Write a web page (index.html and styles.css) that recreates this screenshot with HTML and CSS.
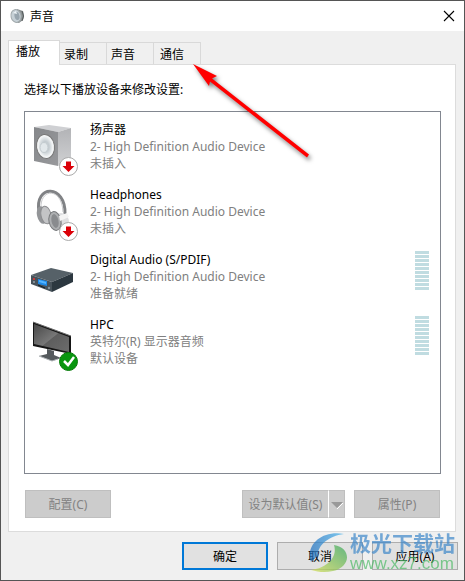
FILE: index.html
```html
<!DOCTYPE html>
<html lang="zh-CN">
<head>
    <meta charset="UTF-8">
    <meta name="viewport" content="width=device-width, initial-scale=1.0">
    <title>声音</title>
    <link rel="stylesheet" href="styles.css">
</head>
<body>

<!-- Shared shapes -->
<svg class="defs" width="0" height="0" aria-hidden="true">
    <defs>
        <linearGradient id="metal" x1="0" y1="0" x2="1" y2="1">
            <stop offset="0" stop-color="#85878a"/>
            <stop offset="1" stop-color="#98999c"/>
        </linearGradient>
        <linearGradient id="side" x1="0" y1="0" x2="0" y2="1">
            <stop offset="0" stop-color="#b2b3b6"/>
            <stop offset="1" stop-color="#d0d1d3"/>
        </linearGradient>
        <linearGradient id="screen" x1="0" y1="0" x2="1" y2="1">
            <stop offset="0" stop-color="#484848"/>
            <stop offset="0.5" stop-color="#777"/>
            <stop offset="0.52" stop-color="#5e5e5e"/>
            <stop offset="1" stop-color="#6c6c6c"/>
        </linearGradient>
        <radialGradient id="cone">
            <stop offset="0" stop-color="#d5dde1"/>
            <stop offset="0.5" stop-color="#c3cbd0"/>
            <stop offset="1" stop-color="#eef1f2"/>
        </radialGradient>
        <linearGradient id="swoosh" x1="0" y1="0" x2="1" y2="0">
            <stop offset="0" stop-color="#1f6fc0"/>
            <stop offset="1" stop-color="#47b4ec"/>
        </linearGradient>
        <linearGradient id="leaf" x1="0" y1="1" x2="1" y2="0">
            <stop offset="0" stop-color="#d6dd52"/>
            <stop offset="1" stop-color="#2fa557"/>
        </linearGradient>
        <g id="unplugged">
            <circle cx="38.500" cy="45.500" r="9" fill="#fff" stroke="#aaa"/>
            <path d="M36 40.500h5v4.500h3.500l-6 6-6-6H36z" fill="#db0008"/>
        </g>
    </defs>
</svg>

<div class="window">
    <header class="titlebar">
        <svg class="app-icon" width="16" height="16" viewBox="0 0 16 16">
            <path d="M7 1l6 2q2 5 0 9l-4 3-4-1z" fill="#8c9293"/>
            <ellipse cx="6" cy="8" rx="5" ry="6.500" transform="rotate(-12 6 8)" fill="#c6d0d6" stroke="#a1a9ac"/>
            <ellipse cx="7" cy="8" rx="2.500" ry="4" transform="rotate(-12 7 8)" fill="#98a5ae"/>
            <path d="M3 5l3-2 1 3z" fill="#edf3f6"/>
            <path d="M12 3q3 5 0 10" fill="none" stroke="#555b5c"/>
        </svg>
        <h1 class="title">声音</h1>
        <button class="close" aria-label="关闭">
            <svg width="12" height="12" viewBox="0 0 12 12"><path d="M1 1l10 10M11 1L1 11" stroke="#000" stroke-width="1.100"/></svg>
        </button>
    </header>

    <main class="content">
        <div class="tabs" role="tablist">
            <button class="tab active" role="tab" aria-selected="true">播放</button>
            <button class="tab" role="tab">录制</button>
            <button class="tab" role="tab">声音</button>
            <button class="tab" role="tab">通信</button>
        </div>

        <section class="panel">
            <p class="hint">选择以下播放设备来修改设置:</p>

            <ul class="devices">
                <li class="device">
                    <svg class="device-icon" width="50" height="56" viewBox="0 0 50 56">
                        <path d="M4 6l15-2 22 3-13 4z" fill="#cfd0d3"/>
                        <path d="M28 11l13-4v31l-13 7z" fill="url(#side)"/>
                        <path d="M4 6l24 5v34L4 40z" fill="url(#metal)"/>
                        <ellipse cx="15.500" cy="25.500" rx="9" ry="12" transform="rotate(-8 15.500 25.500)" fill="#f2f4f5" stroke="#777"/>
                        <ellipse cx="15.500" cy="25.500" rx="7" ry="10" transform="rotate(-8 15.500 25.500)" fill="url(#cone)"/>
                        <ellipse cx="14" cy="26.500" rx="4" ry="5" fill="#e2e8eb" stroke="#c3cbcf"/>
                        <use href="#unplugged"/>
                    </svg>
                    <div class="device-text">
                        <h2 class="name">扬声器</h2>
                        <p class="detail">2- High Definition Audio Device</p>
                        <p class="detail">未插入</p>
                    </div>
                </li>
                <li class="device">
                    <svg class="device-icon" width="50" height="56" viewBox="0 0 50 56">
                        <path d="M9 26C4-2 36-2 35 28" fill="none" stroke="#808285" stroke-width="3"/>
                        <path d="M11 22C10 2 32 1 33 26" fill="none" stroke="#c7c8ca"/>
                        <ellipse cx="12" cy="29" rx="5" ry="9" transform="rotate(-12 12 29)" fill="#939598"/>
                        <ellipse cx="16" cy="29" rx="5" ry="9" transform="rotate(-12 16 29)" fill="#c3c4c6" stroke="#8c8d90"/>
                        <ellipse cx="31" cy="36" rx="8" ry="9" fill="#dedfe1"/>
                        <ellipse cx="25" cy="35" rx="6" ry="9.500" transform="rotate(-12 25 35)" fill="#aeb0b2" stroke="#77797c"/>
                        <ellipse cx="25" cy="35" rx="3.500" ry="7" transform="rotate(-12 25 35)" fill="#898b8e"/>
                        <path d="M29 30l8-3 2 4-9 4z" fill="#f4f4f4"/>
                        <use href="#unplugged"/>
                    </svg>
                    <div class="device-text">
                        <h2 class="name">Headphones</h2>
                        <p class="detail">2- High Definition Audio Device</p>
                        <p class="detail">未插入</p>
                    </div>
                </li>
                <li class="device">
                    <svg class="device-icon" width="50" height="56" viewBox="0 0 50 56">
                        <path d="M1 24l20-7 22 5-21 9z" fill="#566168"/>
                        <path d="M1 24l21 7v10L1 33z" fill="#47525a"/>
                        <path d="M22 31l21-9v9l-21 10z" fill="#2c3840"/>
                        <path d="M8 28l9 2v5l-9-2z" fill="#1e8bea"/>
                        <path d="M9 29l7 2v2l-7-2z" fill="#55b5ff"/>
                        <path d="M8 34l7 3" stroke="#101c25"/>
                        <circle cx="4" cy="28" r="1" fill="#ea3434"/>
                        <circle cx="4" cy="31" r="1" fill="#92a0a8"/>
                        <circle cx="19" cy="37" r="1.200" fill="#84939c"/>
                    </svg>
                    <div class="device-text">
                        <h2 class="name">Digital Audio (S/PDIF)</h2>
                        <p class="detail">2- High Definition Audio Device</p>
                        <p class="detail">准备就绪</p>
                    </div>
                    <div class="meter"></div>
                </li>
                <li class="device">
                    <svg class="device-icon" width="50" height="56" viewBox="0 0 50 56">
                        <path d="M17 33l7 2v4l7 3-9 3-13-5 8-2z" fill="#555a5d"/>
                        <path d="M9 40l13 5 6-2" fill="none" stroke="#aeb3b6"/>
                        <path d="M3 6l38 14v18L3 30z" fill="#151515"/>
                        <path d="M4 8l35 13v15L4 28z" fill="url(#screen)"/>
                        <path d="M3 6l38 14" stroke="#6c6c6c"/>
                        <circle cx="38.500" cy="45.500" r="9" fill="#08960f" stroke="#087b0b"/>
                        <path d="M34 45l4 4 6-8" fill="none" stroke="#fff" stroke-width="2.500"/>
                    </svg>
                    <div class="device-text">
                        <h2 class="name">HPC</h2>
                        <p class="detail">英特尔(R) 显示器音频</p>
                        <p class="detail">默认设备</p>
                    </div>
                    <div class="meter"></div>
                </li>
            </ul>

            <div class="actions">
                <button class="btn configure" disabled>配置(C)</button>
                <div class="split">
                    <button class="btn split-main" disabled>设为默认值(S)</button>
                    <button class="btn split-arrow" disabled aria-label="更多">
                        <svg width="12" height="8" viewBox="0 0 12 8"><path d="M0 1h12L6 7z" fill="#999"/><path d="M6 8l6-6" stroke="#fff"/></svg>
                    </button>
                </div>
                <button class="btn" disabled>属性(P)</button>
            </div>
        </section>

        <footer class="footer">
            <button class="btn primary">确定</button>
            <button class="btn">取消</button>
            <button class="btn">应用(A)</button>
        </footer>
    </main>

    <svg class="pointer" width="130" height="108" viewBox="0 0 130 108" aria-hidden="true">
        <path d="M5 4l24 12-5 2.500 97 76-2 3-97-76-1 4.500z" fill="#f00"/>
    </svg>

    <div class="watermark">
        <svg width="42" height="42" viewBox="0 0 42 42" aria-hidden="true">
            <path d="M3 31C-3 14 14-1 36 3 20 5 9 15 10 25q-3 2-7 6z" fill="url(#swoosh)"/>
            <path d="M3 39C18 37 30 27 26 14c18 3 17 22-1 26-8 2-15 1-22-1z" fill="url(#leaf)"/>
        </svg>
        <div class="watermark-text">
            <span class="site">极光下载站</span>
            <span class="url">www.xz7.com</span>
        </div>
    </div>
</div>

</body>
</html>
```

FILE: styles.css
```css
* {
    box-sizing: border-box;
}

body {
    margin: 0;
    min-height: 100vh;
    display: flex;
    font-family: "Noto Sans", "Noto Sans CJK SC", sans-serif;
    font-size: 12px;
    color: #000;
}

h1, h2, p, ul {
    margin: 0;
    padding: 0;
    font-weight: normal;
}

button {
    font: inherit;
    color: inherit;
    padding: 0;
}

.defs {
    position: absolute;
}

.window {
    position: relative;
    flex: 1;
    display: flex;
    flex-direction: column;
    background-color: #f0f0f0;
    border: 1px solid #555;
}

/* Title bar */
.titlebar {
    display: flex;
    align-items: center;
    gap: 4px;
    height: 30px;
    padding: 0 9px;
    background-color: #fff;
}

.title {
    flex: 1;
    font-size: 12px;
}

.close {
    display: flex;
    border: none;
    background: none;
}

.content {
    flex: 1;
    display: flex;
    flex-direction: column;
    padding: 9px 8px 10px 7px;
}

/* Tabs */
.tabs {
    display: flex;
    align-items: flex-end;
}

.tab {
    width: 47px;
    height: 22px;
    padding-left: 4px;
    text-align: left;
    border: 1px solid #d9d9d9;
    border-left: none;
    border-bottom: none;
    background-color: #f0f0f0;
}

.tab.active {
    width: 52px;
    height: 25px;
    margin-bottom: -1px;
    padding: 0 0 4px 7px;
    border-left: 1px solid #d9d9d9;
    background-color: #fff;
    z-index: 1;
}

.tab:last-child {
    padding-left: 6px;
}

.panel {
    flex: 1;
    display: flex;
    flex-direction: column;
    padding: 16px 14px 13px 15px;
    background-color: #fff;
    border: 1px solid #dcdcdc;
}

.hint {
    line-height: 18px;
    margin-bottom: 12px;
}

/* Device list */
.devices {
    flex: 1;
    padding: 9px 11px 0 5px;
    list-style: none;
    border: 1px solid #828790;
}

.device {
    display: flex;
    height: 65px;
}

.device-icon {
    margin-right: 10px;
}

.device-text {
    flex: 1;
    line-height: 17px;
}

.name {
    font-size: 12px;
}

.detail {
    color: #808080;
}

.meter {
    width: 14px;
    height: 39px;
    background: repeating-linear-gradient(#c0dce1 0 3px, #fff 3px 4px);
}

/* Buttons */
.btn {
    width: 86px;
    height: 28px;
    border: 1px solid #adadad;
    background-color: #e1e1e1;
}

.btn:disabled {
    color: #838383;
    border-color: #bfbfbf;
    background-color: #ccc;
}

.btn.primary {
    border: 2px solid #0078d7;
}

.actions {
    display: flex;
    gap: 9px;
    margin-top: 16px;
    padding: 0 1px;
}

.configure {
    margin-right: auto;
}

.split {
    display: flex;
}

.split .split-main {
    border-right: none;
}

.split .split-arrow {
    width: 17px;
    border-left: 1px solid #fff;
}

.footer {
    display: flex;
    justify-content: flex-end;
    gap: 9px;
    margin: 10px -2px 0 0;
}

/* Red arrow drawn over the dialog */
.pointer {
    position: absolute;
    left: 187px;
    top: 59px;
    filter: drop-shadow(2px 3px 2px rgba(0, 0, 0, 0.5));
    pointer-events: none;
}

.watermark {
    position: absolute;
    right: 9px;
    bottom: 7px;
    display: flex;
    opacity: 0.7;
    pointer-events: none;
}

.watermark-text {
    display: flex;
    flex-direction: column;
}

.site {
    font-size: 21px;
    font-weight: bold;
    line-height: 24px;
    color: #3e88ca;
}

.url {
    font-family: "Liberation Sans", sans-serif;
    font-size: 17px;
    line-height: 18px;
    color: #4cba65;
}
```
